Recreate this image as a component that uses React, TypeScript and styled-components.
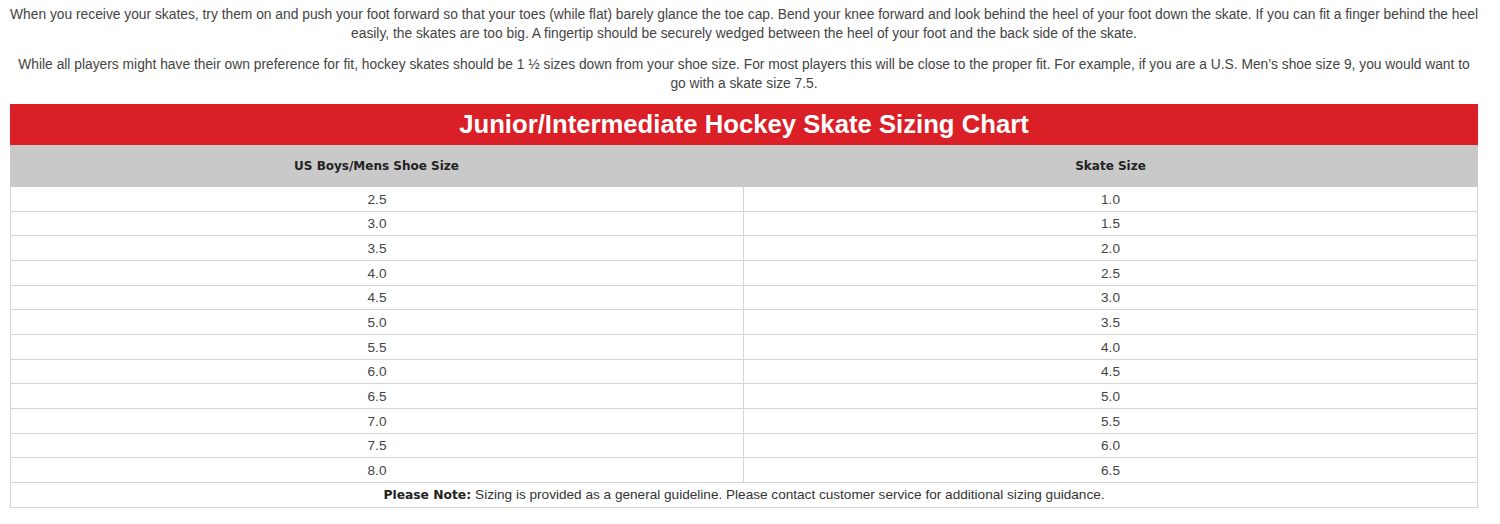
import React from "react";
import styled, { createGlobalStyle } from "styled-components";

const Global = createGlobalStyle`
  html, body { margin: 0; padding: 0; background: #fff; }
  body { font-family: "Liberation Sans", Arial, sans-serif; }
`;

const Page = styled.div`
  width: 1468px;
  padding: 5px 0 0 10px;
`;

const Para = styled.p`
  margin: 0 -1px 12px;
  font-size: 13.8px;
  line-height: 19px;
  color: #444;
  text-align: center;
  &:last-of-type { margin-bottom: 11px; }
`;

const Table = styled.div`
  border: 1px solid #d4d4d4;
  border-top: none;
`;

const Title = styled.div`
  height: 41px;
  background: #da1f27;
  color: #fff;
  font-family: "Liberation Sans", Arial, sans-serif;
  font-weight: bold;
  font-size: 25.7px;
  display: flex;
  align-items: center;
  justify-content: center;
  margin: 0 -1px;
`;

const HeadRow = styled.div`
  height: 42px;
  background: #c9c9c9;
  display: grid;
  grid-template-columns: 733px 1fr;
  margin: 0 -1px;
`;

const HeadCell = styled.div`
  display: flex;
  align-items: center;
  justify-content: center;
  font-family: "DejaVu Sans", Verdana, sans-serif;
  font-weight: bold;
  font-size: 12px;
  color: #222;
`;

const Row = styled.div`
  height: 24.67px;
  box-sizing: border-box;
  border-bottom: 1px solid #d4d4d4;
  display: grid;
  grid-template-columns: 733px 1fr;
`;

const Cell = styled.div<{ $divider?: boolean }>`
  display: flex;
  align-items: center;
  justify-content: center;
  font-size: 13.6px;
  color: #444;
  padding-top: 1px;
  ${(p) => (p.$divider ? "border-right: 1px solid #d4d4d4;" : "")}
`;

const Note = styled.div`
  height: 24px;
  display: flex;
  align-items: center;
  justify-content: center;
  font-size: 13.6px;
  color: #333;
`;

const NoteLabel = styled.b`
  font-family: "DejaVu Sans", Verdana, sans-serif;
  font-size: 12.3px;
  color: #222;
  margin-right: 4px;
`;

const rows: [string, string][] = [
  ["2.5", "1.0"],
  ["3.0", "1.5"],
  ["3.5", "2.0"],
  ["4.0", "2.5"],
  ["4.5", "3.0"],
  ["5.0", "3.5"],
  ["5.5", "4.0"],
  ["6.0", "4.5"],
  ["6.5", "5.0"],
  ["7.0", "5.5"],
  ["7.5", "6.0"],
  ["8.0", "6.5"],
];

export default function App() {
  return (
    <>
      <Global />
      <Page>
        <Para>
          When you receive your skates, try them on and push your foot forward so that your toes (while flat) barely glance the toe cap. Bend your knee forward and look behind the heel of your foot down the skate. If you can fit a finger behind the heel easily, the skates are too big. A fingertip should be securely wedged between the heel of your foot and the back side of the skate.
        </Para>
        <Para>
          While all players might have their own preference for fit, hockey skates should be 1 ½ sizes down from your shoe size. For most players this will be close to the proper fit. For example, if you are a U.S. Men’s shoe size 9, you would want to go with a skate size 7.5.
        </Para>
        <Table>
          <Title>Junior/Intermediate Hockey Skate Sizing Chart</Title>
          <HeadRow>
            <HeadCell>US Boys/Mens Shoe Size</HeadCell>
            <HeadCell>Skate Size</HeadCell>
          </HeadRow>
          {rows.map(([a, b]) => (
            <Row key={a}>
              <Cell $divider>{a}</Cell>
              <Cell>{b}</Cell>
            </Row>
          ))}
          <Note>
            <NoteLabel>Please Note:</NoteLabel>
            Sizing is provided as a general guideline. Please contact customer service for additional sizing guidance.
          </Note>
        </Table>
      </Page>
    </>
  );
}
